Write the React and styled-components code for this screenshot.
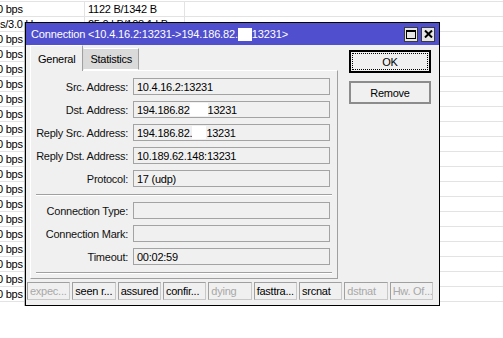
import React from 'react';
import styled, { createGlobalStyle } from 'styled-components';

const GlobalStyle = createGlobalStyle`
    html, body {
        margin: 0;
        padding: 0;
        background: #fff;
    }
    body {
        font-family: "Liberation Sans", Arial, sans-serif;
        font-size: 11px;
        letter-spacing: -0.25px;
        color: #000;
    }
`

const tableRows = [
    { rate: '0 bps', bytes: '1122 B/1342 B', indent: -3 },
    { rate: 's/3.0 kbps', bytes: '25.0 kB/108.1 kB', indent: 0 },
    ...Array.from({ length: 18 }, () => ({ rate: '0 bps', bytes: '', indent: -3 })),
]

const fieldsTop = [
    { label: 'Src. Address:', value: ['10.4.16.2:13231'] },
    { label: 'Dst. Address:', value: ['194.186.82', 18, '13231'] },
    { label: 'Reply Src. Address:', value: ['194.186.82.', 14, '13231'] },
    { label: 'Reply Dst. Address:', value: ['10.189.62.148:13231'] },
    { label: 'Protocol:', value: ['17 (udp)'] },
]

const fieldsBottom = [
    { label: 'Connection Type:', value: [] },
    { label: 'Connection Mark:', value: [] },
    { label: 'Timeout:', value: ['00:02:59'] },
]

const flags = [
    { text: 'expec...', on: false },
    { text: 'seen r...', on: true },
    { text: 'assured', on: true },
    { text: 'confir...', on: true },
    { text: 'dying', on: false },
    { text: 'fasttra...', on: true },
    { text: 'srcnat', on: true },
    { text: 'dstnat', on: false },
    { text: 'Hw. Of...', on: false },
]

function MaskedValue({ parts }) {
    return parts.map((p, i) =>
        typeof p === 'number' ? <Mask key={i} $w={p} /> : <span key={i}>{p}</span>
    )
}

function FormRows({ rows }) {
    return (
        <RowList>
            {rows.map((r) => (
                <FormRow key={r.label}>
                    <Label>{r.label}</Label>
                    <Field><MaskedValue parts={r.value} /></Field>
                </FormRow>
            ))}
        </RowList>
    )
}

export default function App() {
    return (
        <Page>
            <GlobalStyle />
            <Table>
                {tableRows.map((r, i) => (
                    <TableRow key={i}>
                        <RateCell><CellText $indent={r.indent}>{r.rate}</CellText></RateCell>
                        <BytesCell>{r.bytes}</BytesCell>
                        <RestCell />
                    </TableRow>
                ))}
            </Table>

            <Window>
                <TitleBar>
                    <Title>
                        Connection &lt;10.4.16.2:13231-&gt;194.186.82.<TitleMask />13231&gt;
                    </Title>
                    <TitleButtons>
                        <TitleButton>
                            <svg width="10" height="9" viewBox="0 0 10 9">
                                <rect x="0.5" y="0.5" width="9" height="8" fill="none" stroke="#000" />
                                <rect x="0" y="0" width="10" height="2" fill="#000" />
                            </svg>
                        </TitleButton>
                        <TitleButton>
                            <svg width="9" height="8" viewBox="0 0 9 8">
                                <path d="M1 0.5 L8 7.5 M8 0.5 L1 7.5" stroke="#000" strokeWidth="2" />
                            </svg>
                        </TitleButton>
                    </TitleButtons>
                </TitleBar>

                <Body>
                    <Main>
                        <Tabs>
                            <Tab $active>General</Tab>
                            <Tab>Statistics</Tab>
                        </Tabs>
                        <Panel>
                            <FormRows rows={fieldsTop} />
                            <Separator />
                            <FormRows rows={fieldsBottom} />
                            <Separator />
                        </Panel>
                    </Main>
                    <Side>
                        <DialogButton $default>OK</DialogButton>
                        <DialogButton>Remove</DialogButton>
                    </Side>
                </Body>

                <StatusBar>
                    {flags.map((f) => (
                        <StatusBox key={f.text} $on={f.on}>{f.text}</StatusBox>
                    ))}
                </StatusBar>
            </Window>
        </Page>
    )
}

const Page = styled.div`
    position: relative;
    width: 503px;
    height: 338px;
    overflow: hidden;
    background: #fff;
`

const Table = styled.div`
    display: flex;
    flex-direction: column;
    border-top: 1px solid #e3e3e3;
    margin-top: 1px;
`

const TableRow = styled.div`
    display: flex;
    height: 14px;
    border-bottom: 1px solid #e3e3e3;
    line-height: 14px;
`

const RateCell = styled.div`
    width: 84px;
    overflow: hidden;
    white-space: nowrap;
    border-right: 1px solid #e3e3e3;
`

const CellText = styled.span`
    display: inline-block;
    margin-left: ${(p) => p.$indent}px;
`

const BytesCell = styled.div`
    width: 96px;
    padding-left: 3px;
    white-space: nowrap;
    border-right: 1px solid #e3e3e3;
`

const RestCell = styled.div`
    flex: 1;
`

const Window = styled.div`
    position: absolute;
    left: 25px;
    top: 22px;
    width: 415px;
    height: 284px;
    box-sizing: border-box;
    border: 1px solid #000;
    background: #f0f0f0;
    box-shadow: -1px 0 0 #bdbdbd;
    display: flex;
    flex-direction: column;
`

const TitleBar = styled.div`
    height: 22px;
    background: #5050cf;
    display: flex;
    align-items: center;
    justify-content: space-between;
    padding: 0 4px 0 5px;
`

const Title = styled.div`
    color: #fff;
    font-size: 11px;
    letter-spacing: -0.15px;
    white-space: nowrap;
    display: flex;
    align-items: center;
`

const TitleMask = styled.span`
    display: inline-block;
    width: 14px;
    height: 13px;
    background: #fff;
`

const TitleButtons = styled.div`
    display: flex;
    gap: 3px;
`

const TitleButton = styled.div`
    width: 14px;
    height: 15px;
    box-sizing: border-box;
    border: 1px solid #3a3a3a;
    background: #e6e6e6;
    display: flex;
    align-items: center;
    justify-content: center;
`

const Body = styled.div`
    display: flex;
    gap: 11px;
    padding: 1px 0 0 4px;
`

const Main = styled.div`
    width: 308px;
    display: flex;
    flex-direction: column;
`

const Tabs = styled.div`
    display: flex;
    align-items: flex-end;
    height: 25px;
    margin-bottom: -1px;
    position: relative;
    z-index: 1;
`

const Tab = styled.div`
    box-sizing: border-box;
    height: ${(p) => (p.$active ? 26 : 22)}px;
    padding: 0 ${(p) => (p.$active ? 7 : 6)}px;
    display: flex;
    align-items: center;
    font-size: 11px;
    background: ${(p) => (p.$active ? '#f0f0f0' : '#dadada')};
    border: 1px solid;
    border-color: ${(p) => (p.$active ? '#fff #a0a0a0 #f0f0f0 #fff' : '#fff #a0a0a0 #fff #d8d8d8')};
    border-bottom-width: ${(p) => (p.$active ? 0 : 1)}px;
    margin-bottom: ${(p) => (p.$active ? 0 : 1)}px;
`

const Panel = styled.div`
    box-sizing: border-box;
    height: 209px;
    border: 1px solid;
    border-color: #fff #a0a0a0 #a0a0a0 #fff;
    padding: 7px 5px 5px 0;
    display: flex;
    flex-direction: column;
`

const RowList = styled.div`
    display: flex;
    flex-direction: column;
    gap: 6px;
`

const FormRow = styled.div`
    display: flex;
    align-items: center;
    gap: 5px;
`

const Label = styled.div`
    width: 97px;
    text-align: right;
    white-space: nowrap;
    color: #111;
`

const Field = styled.div`
    width: 197px;
    height: 17px;
    box-sizing: border-box;
    border: 1px solid #a3a3a3;
    background: #f0f0f0;
    padding-left: 3px;
    display: flex;
    align-items: center;
    white-space: nowrap;
`

const Mask = styled.span`
    display: inline-block;
    width: ${(p) => p.$w}px;
    height: 13px;
    background: #fff;
`

const Separator = styled.div`
    height: 1px;
    margin: 7px 0 6px 5px;
    border-top: 1px solid #a0a0a0;
    border-bottom: 1px solid #fff;
`

const Side = styled.div`
    display: flex;
    flex-direction: column;
    gap: 8px;
    padding-top: 4px;
`

const DialogButton = styled.div`
    width: 82px;
    height: 23px;
    box-sizing: border-box;
    display: flex;
    align-items: center;
    justify-content: center;
    font-size: 11px;
    background: #f0f0f0;
    border: 2px solid ${(p) => (p.$default ? '#000' : '#8c8c8c')};
    outline: ${(p) => (p.$default ? '1px dotted #000' : 'none')};
    outline-offset: -4px;
`

const StatusBar = styled.div`
    display: grid;
    grid-template-columns: repeat(9, 1fr);
    gap: 2px;
    width: 406px;
    margin: 3px 0 0 1px;
`

const StatusBox = styled.div`
    height: 18px;
    box-sizing: border-box;
    border: 1px solid;
    border-color: #a0a0a0 #c8c8c8 #c8c8c8 #a0a0a0;
    padding-left: 2px;
    display: flex;
    align-items: center;
    white-space: nowrap;
    overflow: hidden;
    color: ${(p) => (p.$on ? '#000' : '#a8a8a8')};
`
